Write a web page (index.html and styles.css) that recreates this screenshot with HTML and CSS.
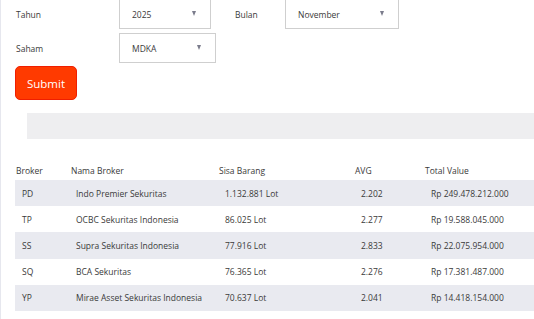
FILE: index.html
```html
<!DOCTYPE html>
<html lang="id">
<head>
    <meta charset="UTF-8">
    <meta name="viewport" content="width=device-width, initial-scale=1.0">
    <title>Sisa Barang Broker</title>
    <link rel="stylesheet" href="styles.css">
</head>
<body>
    <div class="page">
        <form class="filter-form" onsubmit="return false">
            <div class="form-row">
                <label class="field-label" for="tahun">Tahun</label>
                <div class="select-box select-tahun">
                    <select id="tahun">
                        <option>2025</option>
                    </select>
                </div>
                <label class="field-label label-bulan" for="bulan">Bulan</label>
                <div class="select-box select-bulan">
                    <select id="bulan">
                        <option>November</option>
                    </select>
                </div>
            </div>

            <div class="form-row">
                <label class="field-label" for="saham">Saham</label>
                <div class="select-box select-saham">
                    <select id="saham">
                        <option>MDKA</option>
                    </select>
                </div>
            </div>

            <button type="submit" class="submit-btn">Submit</button>
        </form>

        <div class="info-bar"></div>

        <!-- tabel broker -->
        <table class="broker-table">
            <thead>
                <tr>
                    <th class="col-kode">Broker</th>
                    <th class="col-nama">Nama Broker</th>
                    <th class="col-sisa">Sisa Barang</th>
                    <th class="col-avg">AVG</th>
                    <th>Total Value</th>
                </tr>
            </thead>
            <tbody>
                <tr>
                    <td>PD</td>
                    <td class="nama">Indo Premier Sekuritas</td>
                    <td>1.132.881 Lot</td>
                    <td>2.202</td>
                    <td>Rp 249.478.212.000</td>
                </tr>
                <tr>
                    <td>TP</td>
                    <td class="nama">OCBC Sekuritas Indonesia</td>
                    <td>86.025 Lot</td>
                    <td>2.277</td>
                    <td>Rp 19.588.045.000</td>
                </tr>
                <tr>
                    <td>SS</td>
                    <td class="nama">Supra Sekuritas Indonesia</td>
                    <td>77.916 Lot</td>
                    <td>2.833</td>
                    <td>Rp 22.075.954.000</td>
                </tr>
                <tr>
                    <td>SQ</td>
                    <td class="nama">BCA Sekuritas</td>
                    <td>76.365 Lot</td>
                    <td>2.276</td>
                    <td>Rp 17.381.487.000</td>
                </tr>
                <tr>
                    <td>YP</td>
                    <td class="nama">Mirae Asset Sekuritas Indonesia</td>
                    <td>70.637 Lot</td>
                    <td>2.041</td>
                    <td>Rp 14.418.154.000</td>
                </tr>
            </tbody>
        </table>
    </div>
</body>
</html>
```

FILE: styles.css
```css
* {
    margin: 0;
    padding: 0;
    box-sizing: border-box;
}

body {
    font-family: "Open Sans", "Noto Sans", sans-serif;
    font-size: 8.5px;
    color: #3a3a3a;
    background: white;
    border-left: 1px solid #e6e7ee;
    min-height: 100vh;
    overflow: hidden;
}

.page {
    padding-left: 14px;
}

.filter-form {
    margin-top: -1px;
}

.form-row {
    display: flex;
    align-items: center;
    margin-bottom: 4px;
}

.field-label {
    width: 104px;
    padding-left: 1px;
}

.label-bulan {
    width: 51px;
    margin-left: 23px;
}

.select-box {
    position: relative;
    height: 30px;
    border: 1px solid #cfcfcf;
    background: white;
}

.select-box::after {
    content: '';
    position: absolute;
    top: 11px;
    right: 14px;
    border-left: 2.5px solid transparent;
    border-right: 2.5px solid transparent;
    border-top: 5px solid #7b7c8c;
}

.select-box select {
    appearance: none;
    -webkit-appearance: none;
    border: none;
    background: transparent;
    font-family: inherit;
    font-size: 8.5px;
    color: #3a3a3a;
    width: 100%;
    height: 100%;
    padding-left: 12px;
    outline: none;
}

.select-tahun {
    width: 92px;
}

.select-saham {
    width: 97px;
}

.select-bulan {
    width: 114px;
}

.submit-btn {
    display: block;
    margin-top: -1px;
    width: 62px;
    height: 34px;
    background: #ff3a00;
    border: 1px solid #f01e00;
    border-radius: 5px;
    color: white;
    font-family: inherit;
    font-size: 11.5px;
    cursor: pointer;
}

.info-bar {
    margin: 13px 0 21px 12px;
    height: 26px;
    background: #eeeef0;
}

.broker-table {
    width: 100%;
    border-collapse: collapse;
}

.broker-table th {
    text-align: left;
    font-weight: normal;
    height: 20px;
    padding: 1px 0 0 1px;
    vertical-align: middle;
}

.broker-table td {
    height: 26.2px;
    padding: 0 0 0 7px;
    vertical-align: middle;
}

.broker-table td.nama {
    padding-left: 6px;
}

.broker-table tbody tr:nth-child(odd) {
    background: #e9eaf0;
}

.col-kode {
    width: 55px;
}

.col-nama {
    width: 148px;
}

.col-sisa {
    width: 136px;
}

.col-avg {
    width: 70px;
}
```
